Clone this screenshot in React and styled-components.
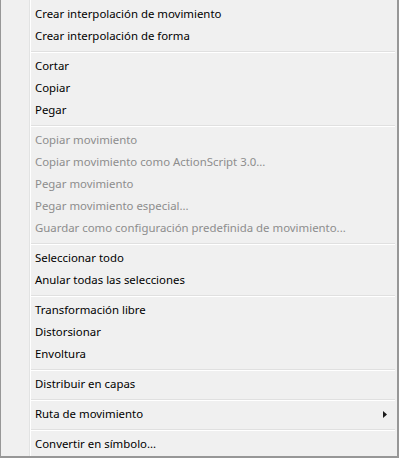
import React from "react";
import styled, { createGlobalStyle } from "styled-components";

const Global = createGlobalStyle`
  html, body { margin: 0; padding: 0; background: #f0f0f0; }
  #root { width: 399px; height: 458px; }
`;

const Menu = styled.div`
  position: relative;
  box-sizing: border-box;
  width: 399px;
  height: 458px;
  background: #f0f0f0;
  border-left: 1px solid #979797;
  border-right: 2px solid #979797;
  border-bottom: 2px solid #979797;
  padding: 3px 0 0 0;
  display: flex;
  flex-direction: column;
  font-family: "Noto Sans", "Open Sans", sans-serif;
  font-size: 11.4px;
  overflow: hidden;
`;

const Gutter = styled.div`
  position: absolute;
  top: 0;
  bottom: 0;
  left: 28px;
  width: 1px;
  background: #e2e3e3;
  border-right: 1px solid #ffffff;
`;

const Item = styled.div`
  position: relative;
  height: 22px;
  display: flex;
  align-items: center;
  padding-left: 34px;
  padding-right: 0;
  color: ${(p) => (p.$disabled ? "#8d8d8d" : "#000000")};
  white-space: nowrap;
`;

const Label = styled.span`
  flex: 1;
  line-height: 22px;
`;

const Arrow = styled.svg`
  width: 4px;
  height: 7px;
  margin-right: 10px;
  flex: none;
`;

const Separator = styled.div`
  height: 8px;
  display: flex;
  align-items: flex-start;
  padding-left: 29px;
  padding-right: 2px;
  &::after {
    content: "";
    display: block;
    flex: 1;
    margin-top: 4px;
    height: 1px;
    background: #e0e0e0;
    border-bottom: 1px solid #ffffff;
  }
`;

const groups = [
  [["Crear interpolación de movimiento"], ["Crear interpolación de forma"]],
  [["Cortar"], ["Copiar"], ["Pegar"]],
  [
    ["Copiar movimiento", true],
    ["Copiar movimiento como ActionScript 3.0...", true],
    ["Pegar movimiento", true],
    ["Pegar movimiento especial...", true],
    ["Guardar como configuración predefinida de movimiento...", true],
  ],
  [["Seleccionar todo"], ["Anular todas las selecciones"]],
  [["Transformación libre"], ["Distorsionar"], ["Envoltura"]],
  [["Distribuir en capas"]],
  [["Ruta de movimiento", false, true]],
  [["Convertir en símbolo..."]],
];

export default function App() {
  return (
    <>
      <Global />
      <Menu>
        <Gutter />
        {groups.map((g, gi) => (
          <React.Fragment key={gi}>
            {gi > 0 && <Separator />}
            {g.map(([label, disabled, sub]) => (
              <Item key={label} $disabled={disabled}>
                <Label>{label}</Label>
                {sub && (
                  <Arrow viewBox="0 0 4 7">
                    <path d="M0 0 L4 3.5 L0 7 Z" fill="#1a1a1a" />
                  </Arrow>
                )}
              </Item>
            ))}
          </React.Fragment>
        ))}
      </Menu>
    </>
  );
}
